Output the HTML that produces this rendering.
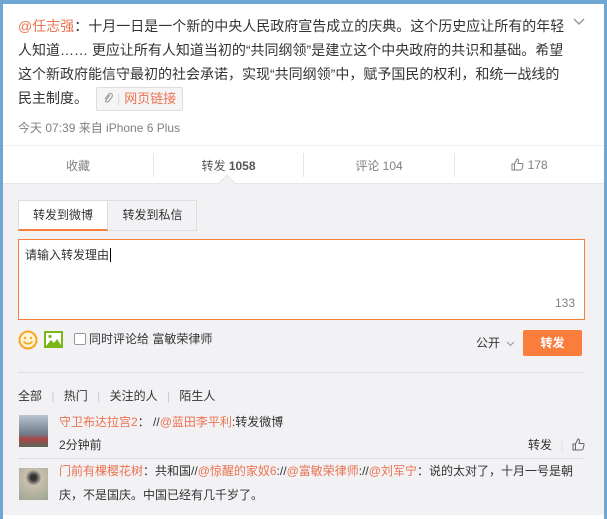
<!DOCTYPE html>
<html><head><meta charset="utf-8"><style>
*{margin:0;padding:0;box-sizing:border-box}
body{width:607px;height:515px;overflow:hidden;background:#6ea6d4;font-family:"Liberation Sans","Noto Sans CJK SC",sans-serif;position:relative}
.card{position:absolute;left:3px;top:4px;width:601px;height:515px;background:#fff}
.a{position:absolute}
.t{color:#333;font-size:14px;line-height:24px}
.o{color:#eb7350}
.g{color:#808080}
</style></head><body>
<div class="card"></div>
<div class="a t" style="left:18px;top:14px;width:552px">
<span class="o">@任志强</span>：十月一日是一个新的中央人民政府宣告成立的庆典。这个历史应让所有的年轻人知道…… 更应让所有人知道当初的“共同纲领”是建立这个中央政府的共识和基础。希望这个新政府能信守最初的社会承诺，实现“共同纲领”中，赋予国民的权利，和统一战线的民主制度。 <span style="display:inline-block;border:1px solid #ddd;border-radius:2px;background:#f5f5f5;height:24px;line-height:22px;padding:0 6px 0 6px;font-size:13px;color:#eb7350;vertical-align:middle;margin-left:4px"><svg width="10" height="12" viewBox="0 0 10 12" style="vertical-align:-1px"><path d="M7 3 L3 8 Q2 10 4 10 Q5 10 6 9 L9 5 Q10 2 8 1.5 Q6.5 1 5.5 2.5 L2 7" fill="none" stroke="#999" stroke-width="1.1"/></svg><span style="color:#ddd;margin:0 4px">|</span>网页链接</span>
</div>
<svg class="a" style="left:573px;top:18px" width="12" height="8" viewBox="0 0 12 8"><path d="M1 1 L6 6 L11 1" fill="none" stroke="#999" stroke-width="1.5"/></svg>
<div class="a g" style="left:18px;top:119px;font-size:12px">今天 07:39 来自 iPhone 6 Plus</div>
<div class="a" style="left:3px;top:145px;width:601px;height:1px;background:#f0f0f0"></div>
<div class="a g" style="left:3px;top:146px;width:601px;height:38px;font-size:12px;display:flex;align-items:center">
<div style="width:150px;text-align:center">收藏</div>
<div style="width:1px;height:24px;background:#e6e6e6"></div>
<div style="width:149px;text-align:center;color:#555">转发 <b style="color:#555">1058</b></div>
<div style="width:1px;height:24px;background:#e6e6e6"></div>
<div style="width:150px;text-align:center">评论 104</div>
<div style="width:1px;height:24px;background:#e6e6e6"></div>
<div style="width:149px;text-align:center"><svg width="13" height="13" viewBox="0 0 13 13" style="vertical-align:-2px"><path d="M1 6 H3.5 V12 H1 Z M3.5 6 L6 1 Q7.5 1 7.5 3 L7 5.5 H11 Q12.3 5.5 12 7 L11 11 Q10.6 12 9.5 12 H3.5" fill="none" stroke="#808080" stroke-width="1"/></svg> 178</div>
</div>
<div class="a" style="left:3px;top:183px;width:601px;height:332px;background:#f2f2f5;border-top:1px solid #e6e6e6"></div>
<div class="a" style="left:221px;top:177px;width:12px;height:12px;background:#f2f2f5;border-left:1px solid #e6e6e6;border-top:1px solid #e6e6e6;transform:rotate(45deg)"></div>
<div class="a" style="left:18px;top:200px;width:179px;height:31px;border:1px solid #ddd;background:#f2f2f5"></div>
<div class="a" style="left:18px;top:200px;width:90px;height:31px;background:#fff;border-bottom:2px solid #fa7d3c;border-left:1px solid #ddd;border-top:1px solid #ddd;border-right:1px solid #ddd;font-size:12px;color:#333;text-align:center;line-height:28px">转发到微博</div>
<div class="a" style="left:108px;top:201px;width:89px;font-size:12px;color:#333;text-align:center;line-height:28px">转发到私信</div>
<div class="a" style="left:18px;top:239px;width:567px;height:81px;background:#fff;border:1px solid #fa7d3c"></div>
<div class="a" style="left:25px;top:246px;font-size:12px;color:#333">请输入转发理由<span style="border-left:1px solid #000;margin-left:1px"></span></div>
<div class="a g" style="left:555px;top:296px;font-size:12px">133</div>
<svg class="a" style="left:18px;top:330px" width="20" height="20" viewBox="0 0 20 20"><circle cx="10" cy="10" r="8.5" fill="#fff3d6" stroke="#f5a623" stroke-width="2"/><circle cx="7" cy="8" r="1.2" fill="#f5a623"/><circle cx="13" cy="8" r="1.2" fill="#f5a623"/><path d="M5.5 11.5 Q10 16 14.5 11.5" fill="none" stroke="#f5a623" stroke-width="1.6"/></svg>
<svg class="a" style="left:44px;top:331px" width="19" height="17" viewBox="0 0 19 17"><rect x="1" y="1" width="17" height="15" fill="#fff" stroke="#7cb518" stroke-width="2"/><path d="M2 15 L7 9 L10 12 L13 8 L17 14 V15 Z" fill="#7cb518"/><circle cx="6" cy="5.5" r="1.6" fill="#7cb518"/></svg>
<div class="a" style="left:74px;top:333px;width:12px;height:12px;border:1px solid #999;border-radius:2px;background:#fff"></div>
<div class="a" style="left:89px;top:330px;font-size:12px;color:#333">同时评论给 富敏荣律师</div>
<div class="a" style="left:476px;top:334px;font-size:12px;color:#333">公开 <svg width="9" height="6" viewBox="0 0 9 6" style="margin-left:3px"><path d="M1 1 L4.5 4.5 L8 1" fill="none" stroke="#999" stroke-width="1"/></svg></div>
<div class="a" style="left:523px;top:330px;width:59px;height:26px;background:#fa7d3c;color:#fff;font-size:12px;font-weight:bold;text-align:center;line-height:26px;border-radius:2px">转发</div>
<div class="a" style="left:18px;top:372px;width:567px;height:1px;background:#ddd"></div>
<div class="a" style="left:18px;top:387px;font-size:12px;color:#333">全部 <span style="color:#ccc;margin:0 6px">|</span> 热门 <span style="color:#ccc;margin:0 6px">|</span> 关注的人 <span style="color:#ccc;margin:0 6px">|</span> 陌生人</div>
<div class="a" style="left:19px;top:415px;width:29px;height:32px;background:linear-gradient(#b9c4cf,#6e7c88 60%,#a44 75%,#5a6a5a)"></div>
<div class="a" style="left:59px;top:413px;font-size:12px;color:#333"><span class="o">守卫布达拉宫2</span>： //<span class="o">@蓝田李平利</span>:转发微博</div>
<div class="a" style="left:59px;top:436px;font-size:12px;color:#333">2分钟前</div>
<div class="a" style="left:528px;top:436px;font-size:12px;color:#333">转发 <span style="color:#ddd;margin:0 5px">|</span> <svg width="13" height="13" viewBox="0 0 13 13" style="vertical-align:-2px"><path d="M1 6 H3.5 V12 H1 Z M3.5 6 L6 1 Q7.5 1 7.5 3 L7 5.5 H11 Q12.3 5.5 12 7 L11 11 Q10.6 12 9.5 12 H3.5" fill="none" stroke="#666" stroke-width="1"/></svg></div>
<div class="a" style="left:18px;top:458px;width:567px;height:1px;background:#ddd"></div>
<div class="a" style="left:19px;top:468px;width:29px;height:32px;background:radial-gradient(circle at 50% 30%,#333 10%,#c9bfae 30%,#9aa58f)"></div>
<div class="a" style="left:59px;top:459px;width:525px;font-size:12px;color:#333;line-height:24px"><span class="o">门前有棵樱花树</span>：共和国//<span class="o">@惊醒的家奴6</span>://<span class="o">@富敏荣律师</span>://<span class="o">@刘军宁</span>：说的太对了，十月一号是朝庆，不是国庆。中国已经有几千岁了。</div>
</body></html>
